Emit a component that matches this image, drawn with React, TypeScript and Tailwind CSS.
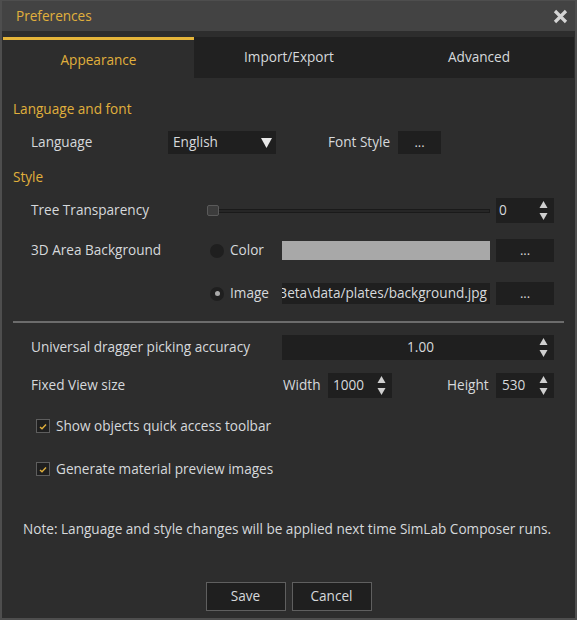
import React from "react";

const Spin = () => (
  <svg width="9" height="21" viewBox="0 0 9 21" className="shrink-0">
    <path d="M4.5 1 L8.5 8 L0.5 8 Z" fill="#cfcfcf" />
    <path d="M0.5 13 L8.5 13 L4.5 20 Z" fill="#cfcfcf" />
  </svg>
);

const DotsButton = ({ className = "" }: { className?: string }) => (
  <div className={`flex items-center justify-center bg-[#1f1f1f] text-[#d8d8d8] text-[13px] ${className}`}>
    <span className="mt-[1px]">...</span>
  </div>
);

const Check = () => (
  <div className="w-[14px] h-[14px] border border-[#5e5e5e] bg-[#1f1f1f] flex items-center justify-center">
    <svg width="8" height="7" viewBox="0 0 8 7">
      <path d="M1 4 L3 5.8 L7 1.5" stroke="#e0b03c" strokeWidth="1.4" fill="none" />
    </svg>
  </div>
);

export default function App() {
  const font = { fontFamily: '"Open Sans", "Noto Sans", sans-serif' };
  return (
    <div
      className="w-[577px] h-[620px] bg-[#2d2d2d] border-2 border-t border-[#4e4e4e] flex flex-col text-[13.6px] text-[#d6d9dc] overflow-hidden"
      style={font}
    >
      {/* Title bar */}
      <div className="h-[30px] bg-[#434343] flex items-center justify-between pl-[14px] pr-[7px] shrink-0">
        <span className="text-[#e0b03c] text-[13.6px]">Preferences</span>
        <svg width="15" height="15" viewBox="0 0 15 15">
          <path d="M2 2 L13 13 M13 2 L2 13" stroke="#d4d4d4" strokeWidth="3.2" />
        </svg>
      </div>
      {/* Tabs */}
      <div className="mt-[6px] mx-[1px] h-[41px] flex shrink-0">
        <div className="w-[191px] bg-[#2d2d2d] border-t-[3px] border-[#e5b53a] flex items-center justify-center pt-[2px] text-[#e0b03c]">
          Appearance
        </div>
        <div className="flex-1 bg-[#212121] flex items-center justify-center">Import/Export</div>
        <div className="flex-1 bg-[#212121] flex items-center justify-center">Advanced</div>
      </div>
      {/* Body */}
      <div className="px-[11px] flex flex-col">
        <div className="mt-[20px] h-[22px] flex items-center text-[#e0b03c]">Language and font</div>
        <div className="mt-[11px] h-[23px] flex items-center pl-[18px]">
          <span className="w-[137px]">Language</span>
          <div className="w-[108px] h-[23px] bg-[#1f1f1f] flex items-center justify-between pl-[5px] pr-[4px]">
            <span>English</span>
            <svg width="11" height="10" viewBox="0 0 11 10">
              <path d="M0 0 L11 0 L5.5 10 Z" fill="#e8e8e8" />
            </svg>
          </div>
          <span className="ml-[52px] w-[70px]">Font Style</span>
          <DotsButton className="w-[43px] h-[23px]" />
        </div>
        <div className="mt-[12px] h-[22px] flex items-center text-[#e0b03c]">Style</div>
        <div className="mt-[10px] h-[25px] flex items-center pl-[18px]">
          <span className="w-[176px]">Tree Transparency</span>
          <div className="relative w-[283px] h-[25px] flex items-center">
            <div className="w-full h-[4px] bg-[#262626] border border-[#1a1a1a]" />
            <div className="absolute left-0 top-[7px] w-[12px] h-[11px] bg-[#3c3c3c] border border-[#5a5a5a] rounded-[2px]" />
          </div>
          <div className="ml-[6px] w-[58px] h-[25px] bg-[#1f1f1f] flex items-center justify-between pl-[3px] pr-[6px]">
            <span>0</span>
            <Spin />
          </div>
        </div>
        <div className="mt-[16px] h-[23px] flex items-center pl-[18px]">
          <span className="w-[179px]">3D Area Background</span>
          <div className="w-[14px] h-[14px] rounded-full bg-[#1f1f1f]" />
          <span className="ml-[6px] w-[52px]">Color</span>
          <div className="w-[208px] h-[19px] bg-[#a8a8a8]" />
          <DotsButton className="ml-[6px] w-[58px] h-[23px]" />
        </div>
        <div className="mt-[20px] h-[23px] flex items-center pl-[197px]">
          <div className="w-[14px] h-[14px] rounded-full bg-[#1f1f1f] flex items-center justify-center">
            <div className="w-[5px] h-[5px] rounded-full bg-[#a9a9a9]" />
          </div>
          <span className="ml-[6px] w-[52px]">Image</span>
          <div className="w-[208px] h-[21px] bg-[#1f1f1f] flex justify-end items-center overflow-hidden pr-[3px] whitespace-nowrap">
            <span className="shrink-0">C:\Program Files\SimLab Composer Beta\data/plates/background.jpg</span>
          </div>
          <DotsButton className="ml-[6px] w-[58px] h-[23px]" />
        </div>
        <div className="mt-[16px] h-[2px] bg-[#6c6c6c]" />
        <div className="mt-[12px] h-[25px] flex items-center pl-[18px]">
          <span className="w-[251px]">Universal dragger picking accuracy</span>
          <div className="w-[272px] h-[25px] bg-[#1f1f1f] flex items-center pr-[6px]">
            <span className="flex-1 text-center pl-[20px]">1.00</span>
            <Spin />
          </div>
        </div>
        <div className="mt-[13px] h-[25px] flex items-center pl-[18px]">
          <span className="w-[252px]">Fixed View size</span>
          <span className="w-[45px]">Width</span>
          <div className="w-[64px] h-[25px] bg-[#1f1f1f] flex items-center justify-between pl-[5px] pr-[6px]">
            <span>1000</span>
            <Spin />
          </div>
          <span className="ml-[55px] w-[49px]">Height</span>
          <div className="w-[58px] h-[25px] bg-[#1f1f1f] flex items-center justify-between pl-[6px] pr-[6px]">
            <span>530</span>
            <Spin />
          </div>
        </div>
        <div className="mt-[18px] h-[20px] flex items-center pl-[23px]">
          <Check />
          <span className="ml-[6px]">Show objects quick access toolbar</span>
        </div>
        <div className="mt-[23px] h-[20px] flex items-center pl-[23px]">
          <Check />
          <span className="ml-[6px]">Generate material preview images</span>
        </div>
        <div className="mt-[39px] h-[22px] flex items-center pl-[10px] whitespace-nowrap">
          Note: Language and style changes will be applied next time SimLab Composer runs.
        </div>
        <div className="mt-[42px] flex justify-center gap-[6px]">
          <button className="w-[80px] h-[29px] bg-[#1f1f1f] border border-[#5f5f5f] text-[#d6d9dc]">Save</button>
          <button className="w-[80px] h-[29px] bg-[#1f1f1f] border border-[#5f5f5f] text-[#d6d9dc]">Cancel</button>
        </div>
      </div>
    </div>
  );
}
